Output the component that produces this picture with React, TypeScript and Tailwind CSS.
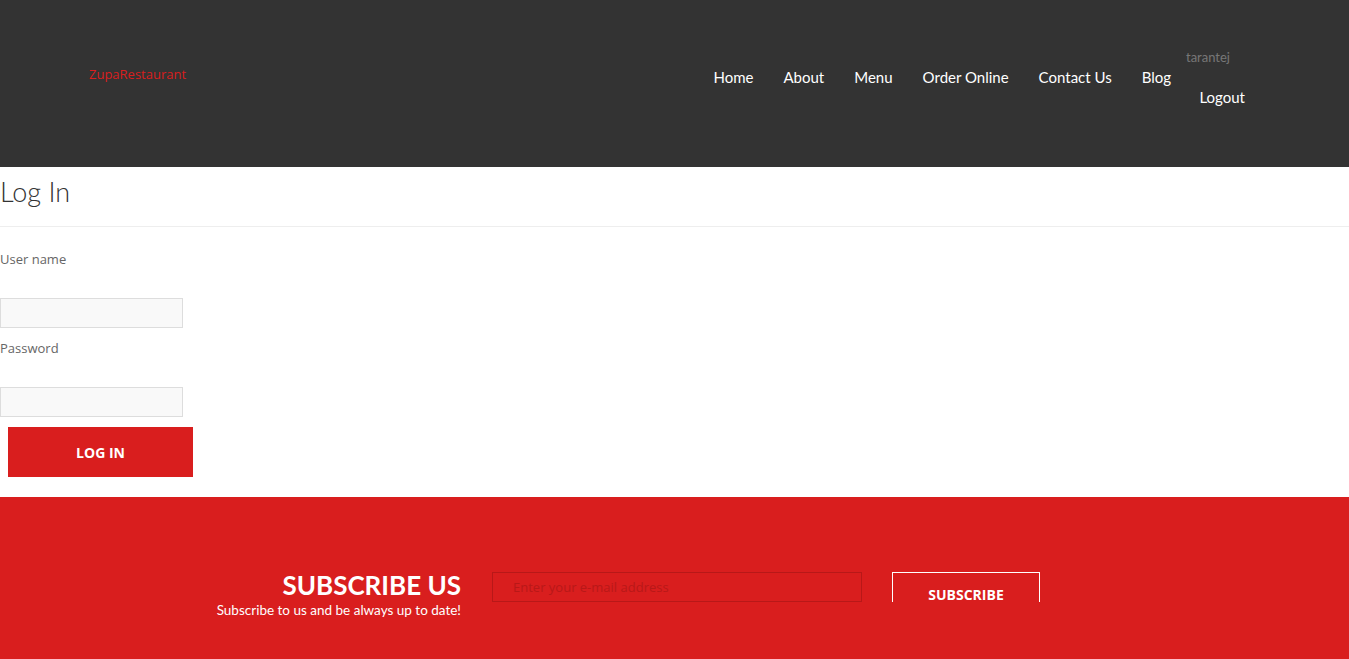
import React from "react";

const nav = ["Home", "About", "Menu", "Order Online", "Contact Us", "Blog"];

export default function App() {
  return (
    <div className="min-h-[659px] w-full bg-white font-['Open_Sans',sans-serif]">
      {/* header */}
      <header className="flex h-[167px] items-start bg-[#333333]">
        <div className="pl-[89px] pt-[65px] text-[13px] text-[#d91e1e]">ZupaRestaurant</div>
        <nav className="ml-auto mr-[104px] flex items-start pt-[66px] font-['Lato',sans-serif] text-[15px] text-white">
          {nav.map((n) => (
            <a key={n} className="px-[15px] leading-[22px]">
              {n}
            </a>
          ))}
          <div className="-mt-[20px] flex flex-col items-end">
            <span className="pr-[15px] text-[13px] leading-[22px] text-[#777]">tarantej</span>
            <a className="mt-[18px] text-[15px] leading-[22px]">Logout</a>
          </div>
        </nav>
      </header>

      {/* login */}
      <main className="pb-[20px]">
        <h1 className="h-[60px] border-b border-[#eeeeee] pt-[8px] font-['Lato',sans-serif] text-[27px] font-light leading-[34px] text-[#333]">
          Log In
        </h1>
        <form className="flex flex-col">
          <label className="mt-[23px] text-[13px] leading-[18px] text-[#666]">User name</label>
          <input className="mt-[30px] h-[30px] w-[183px] border border-[#dddddd] bg-[#f9f9f9]" />
          <label className="mt-[11px] text-[13px] leading-[18px] text-[#666]">Password</label>
          <input type="password" className="mt-[30px] h-[30px] w-[183px] border border-[#dddddd] bg-[#f9f9f9]" />
          <button type="button" className="ml-[8px] mt-[10px] h-[50px] w-[185px] bg-[#d91e1e] text-[14px] font-bold text-white">
            LOG IN
          </button>
        </form>
      </main>

      {/* subscribe */}
      <section className="h-[162px] bg-[#d91e1e] pt-[75px]">
        <div className="flex items-start">
          <div className="w-[461px] text-right text-white">
            <h2 className="font-['Lato',sans-serif] text-[26px] font-bold leading-[26px]">SUBSCRIBE US</h2>
            <p className="mt-[3px] font-['Lato',sans-serif] text-[13.5px] leading-[18px]">Subscribe to us and be always up to date!</p>
          </div>
          <input
            placeholder="Enter your e-mail address"
            className="ml-[31px] h-[30px] w-[370px] border border-[#b81818] bg-transparent px-[20px] text-[13px] placeholder:text-[#b81818]"
          />
          <div className="ml-[30px] flex h-[30px] w-[148px] items-end justify-center border-x border-t border-white">
            <span className="translate-y-[3px] text-[14px] font-bold leading-[20px] text-white">SUBSCRIBE</span>
          </div>
        </div>
      </section>
    </div>
  );
}
